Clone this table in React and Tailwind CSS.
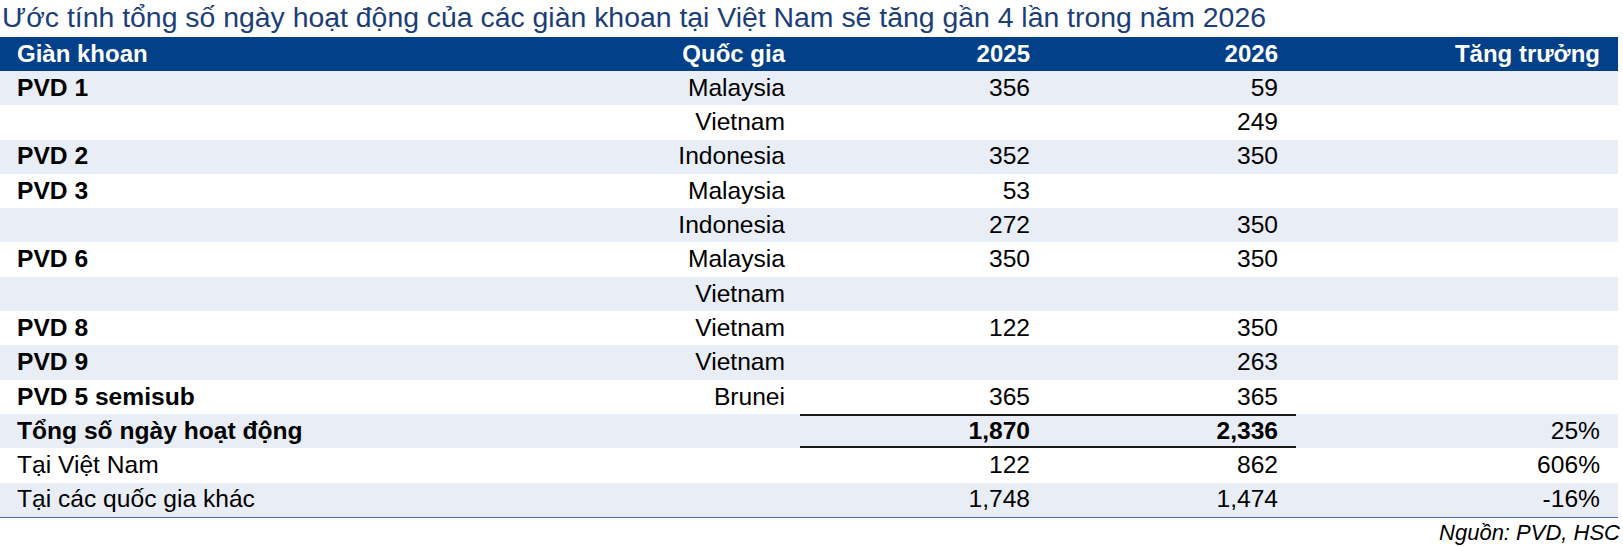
export default function App() {
  const rows = [
    { a: "PVD 1", b: "Malaysia", c: "356", d: "59", e: "", bold: true },
    { a: "", b: "Vietnam", c: "", d: "249", e: "" },
    { a: "PVD 2", b: "Indonesia", c: "352", d: "350", e: "", bold: true },
    { a: "PVD 3", b: "Malaysia", c: "53", d: "", e: "", bold: true },
    { a: "", b: "Indonesia", c: "272", d: "350", e: "" },
    { a: "PVD 6", b: "Malaysia", c: "350", d: "350", e: "", bold: true },
    { a: "", b: "Vietnam", c: "", d: "", e: "" },
    { a: "PVD 8", b: "Vietnam", c: "122", d: "350", e: "", bold: true },
    { a: "PVD 9", b: "Vietnam", c: "", d: "263", e: "", bold: true },
    { a: "PVD 5 semisub", b: "Brunei", c: "365", d: "365", e: "", bold: true },
    { a: "Tổng số ngày hoạt động", b: "", c: "1,870", d: "2,336", e: "25%", bold: true, total: true },
    { a: "Tại Việt Nam", b: "", c: "122", d: "862", e: "606%" },
    { a: "Tại các quốc gia khác", b: "", c: "1,748", d: "1,474", e: "-16%" },
  ];
  return (
    <div
      className="w-[1623px] h-[547px] bg-white text-black"
      style={{ fontFamily: '"Liberation Sans", Arial, sans-serif' }}
    >
      <div className="h-[37px] pl-[2px] pt-[1px] text-[28.4px] leading-[33px] text-[#1b3e78] whitespace-nowrap">
        Ước tính tổng số ngày hoạt động của các giàn khoan tại Việt Nam sẽ tăng gần 4 lần trong năm 2026
      </div>
      <div className="w-[1618px] border-b border-[#4a6a9c]">
        <div className="grid grid-cols-[400px_400px_247px_249px_322px] h-[34px] bg-[#02418a] text-white font-bold text-[24px] items-center leading-none">
          <div className="pl-[17px]">Giàn khoan</div>
          <div className="text-right pr-[15px]">Quốc gia</div>
          <div className="text-right pr-[17px]">2025</div>
          <div className="text-right pr-[18px]">2026</div>
          <div className="text-right pr-[18px]">Tăng trưởng</div>
        </div>
        {rows.map((r, i) => (
          <div
            key={i}
            className={`grid grid-cols-[400px_400px_247px_249px_322px] h-[34.3px] text-[24.6px] items-center leading-none ${
              i % 2 === 0 ? "bg-[#e9edf5]" : "bg-white"
            }`}
          >
            <div className={`pl-[17px] whitespace-nowrap ${r.bold ? "font-bold" : ""}`}>{r.a}</div>
            <div className="text-right pr-[15px]">{r.b}</div>
            <div
              className={`h-full flex items-center justify-end pr-[17px] ${
                r.total ? "font-bold border-y-2 border-[#1a1a1a]" : ""
              }`}
            >
              {r.c}
            </div>
            <div
              className={`h-full flex items-center justify-end pr-[18px] ${
                r.total ? "font-bold border-y-2 border-[#1a1a1a]" : ""
              }`}
            >
              {r.d}
            </div>
            <div className="text-right pr-[18px]">{r.e}</div>
          </div>
        ))}
      </div>
      <div className="w-[1620px] text-right italic text-[22px] leading-[28px] pt-[1px]">Nguồn: PVD, HSC</div>
    </div>
  );
}
